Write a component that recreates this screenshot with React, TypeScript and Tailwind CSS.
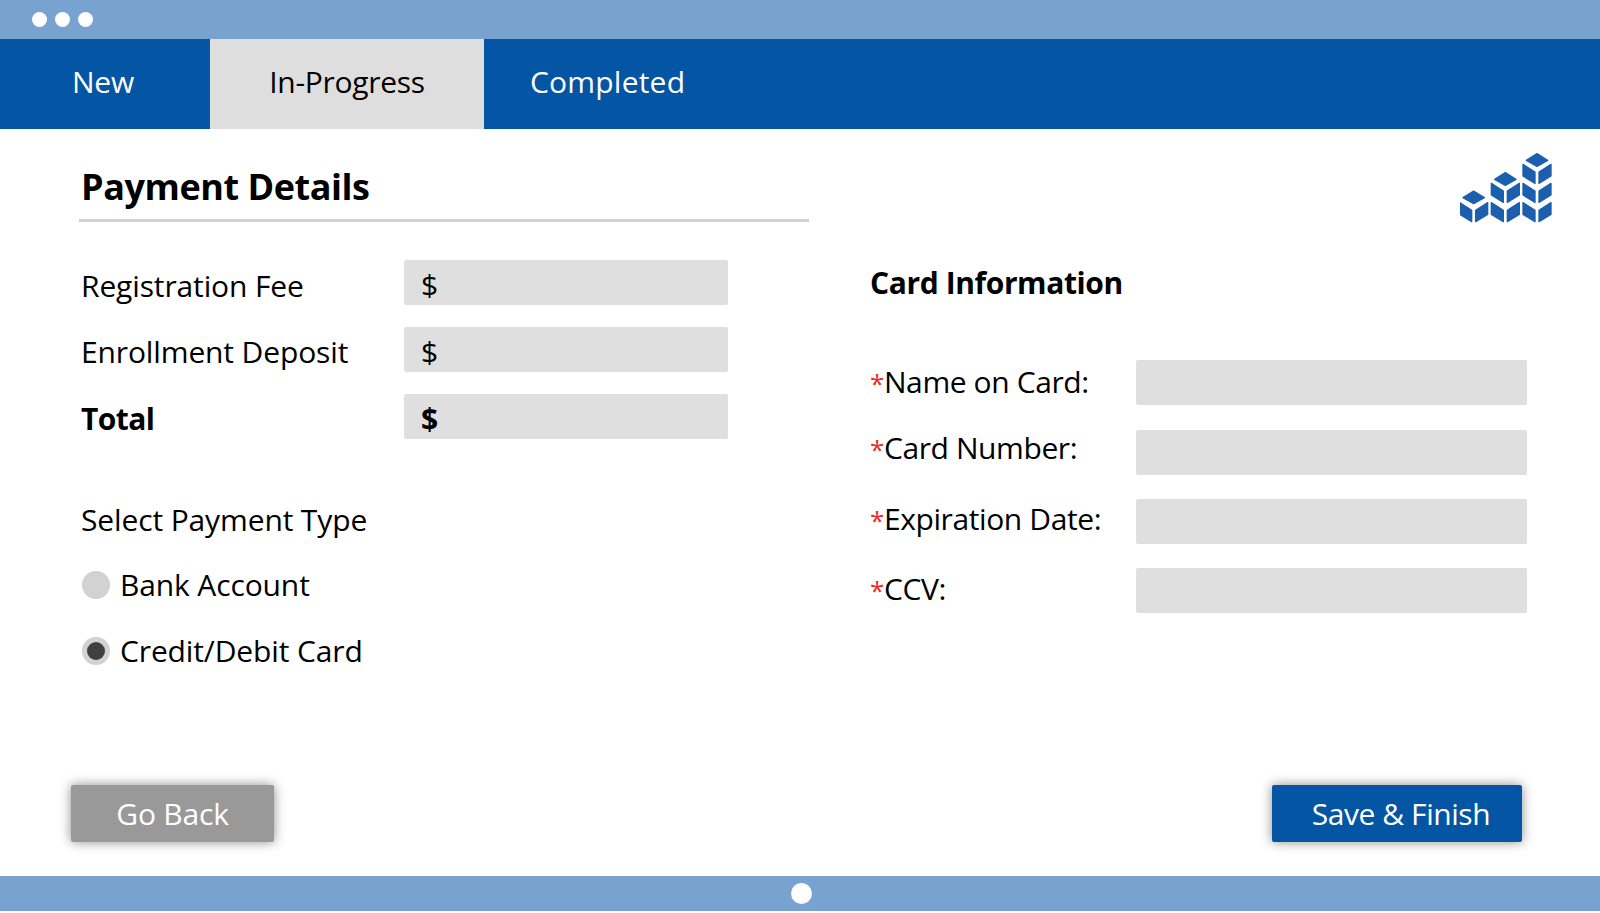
const font = "font-['Open_Sans',sans-serif]";

function Cube({ cx, y }: { cx: number; y: number }) {
  return (
    <g fill="#1b5fae" stroke="#1b5fae" strokeWidth="4" strokeLinejoin="round">
      <polygon points={`${cx + 6},${y + 23} ${cx + 42},${y} ${cx + 42},${y + 35} ${cx + 6},${y + 57}`} />
      <polygon points={`${cx - 6},${y + 23} ${cx - 42},${y} ${cx - 42},${y + 35} ${cx - 6},${y + 57}`} />
    </g>
  );
}

function Top({ cx, y }: { cx: number; y: number }) {
  return (
    <polygon
      points={`${cx},${y} ${cx + 32},${y + 20} ${cx},${y + 38} ${cx - 32},${y + 20}`}
      fill="#1b5fae"
      stroke="#1b5fae"
      strokeWidth="4"
      strokeLinejoin="round"
    />
  );
}

function Logo() {
  return (
    <svg width="94" height="72" viewBox="92 36 282 216" className="block">
      <Top cx={133} y={150} />
      <Cube cx={133} y={185} />
      <Top cx={228} y={95} />
      <Cube cx={228} y={127} />
      <Cube cx={228} y={185} />
      <Top cx={323} y={38} />
      <Cube cx={323} y={70} />
      <Cube cx={323} y={127} />
      <Cube cx={323} y={185} />
    </svg>
  );
}

function Dot() {
  return <span className="block w-[15px] h-[15px] rounded-full bg-white" />;
}

function AmountRow({ label, bold, shift }: { label: string; bold?: boolean; shift: string }) {
  return (
    <div className="flex items-start h-[45px]">
      <span className={`w-[325px] pl-[2px] text-[30px] leading-[45px] text-black ${shift} ${bold ? "font-bold tracking-[-0.6px]" : "tracking-[-0.13px]"}`}>{label}</span>
      <div className={`w-[324px] h-[45px] bg-[#dfdfdf] rounded-[2px] pl-[17px] pt-[2px] text-[30px] leading-[45px] text-black ${bold ? "font-bold" : ""}`}>$</div>
    </div>
  );
}

function CardRow({ label, gap, shift }: { label: string; gap: string; shift: string }) {
  return (
    <div className={`flex items-start h-[45px] ${gap}`}>
      <span className={`w-[266px] text-[30px] leading-[45px] tracking-[-0.4px] text-black whitespace-nowrap ${shift}`}>
        <span className="text-[#ee2a2a] text-[26px]">*</span>
        {label}
      </span>
      <div className="w-[391px] h-[45px] bg-[#dfdfdf] rounded-[2px]" />
    </div>
  );
}

function Radio({ label, checked }: { label: string; checked?: boolean }) {
  return (
    <div className="flex items-center h-[45px] pl-[3px]">
      <span className="w-[28px] h-[28px] rounded-full bg-[#d2d2d2] flex items-center justify-center">
        {checked && <span className="block w-[18px] h-[18px] rounded-full bg-[#404040]" />}
      </span>
      <span className="ml-[10px] text-[30px] leading-[45px] tracking-[-0.13px] text-black">{label}</span>
    </div>
  );
}

export default function App() {
  return (
    <div className={`w-[1600px] h-[913px] bg-white flex flex-col overflow-hidden ${font}`}>
      <div className="h-[39px] bg-[#78a2d0] flex items-center pl-[32px] gap-[8px] shrink-0">
        <Dot />
        <Dot />
        <Dot />
      </div>
      <div className="h-[90px] bg-[#0455a4] flex shrink-0 text-[30px] pb-[6px]">
        <div className="w-[210px] -mb-[6px] pb-[6px] flex items-center justify-center text-white tracking-[-0.2px] pr-[4px]">New</div>
        <div className="w-[274px] -mb-[6px] pb-[6px] flex items-center justify-center bg-[#dedede] text-black tracking-[-0.3px]">In-Progress</div>
        <div className="pl-[46px] flex items-center text-white tracking-[0.2px]">Completed</div>
      </div>

      <div className="flex-1 flex flex-col min-h-0">
        <div className="flex flex-1 min-h-0">
          <div className="w-[870px] shrink-0 pl-[79px] pt-[28px]">
            <div className="w-[730px] h-[65px] border-b-[3px] border-[#d2d2d2] pl-[2px] pt-[2px]">
              <h1 className="text-[36px] leading-[56px] font-bold tracking-[-0.45px] text-black">Payment Details</h1>
            </div>
            <div className="mt-[38px] flex flex-col gap-[22px]">
              <AmountRow label="Registration Fee" shift="mt-[3px]" />
              <AmountRow label="Enrollment Deposit" shift="mt-[2px]" />
              <AmountRow label="Total" bold shift="mt-[2px]" />
            </div>
            <div className="mt-[58px] pl-[2px] text-[30px] leading-[45px] tracking-[-0.13px] text-black">Select Payment Type</div>
            <div className="mt-[20px] flex flex-col gap-[21px]">
              <Radio label="Bank Account" />
              <Radio label="Credit/Debit Card" checked />
            </div>
          </div>
          <div className="flex-1 relative">
            <div className="absolute right-[46px] top-[24px]">
              <Logo />
            </div>
            <h2 className="mt-[131px] text-[30px] leading-[45px] font-bold tracking-[-0.4px] text-black">Card Information</h2>
            <div className="mt-[55px] flex flex-col">
              <CardRow label="Name on Card:" gap="" shift="-mt-[1px]" />
              <CardRow label="Card Number:" gap="mt-[25px]" shift="-mt-[5px]" />
              <CardRow label="Expiration Date:" gap="mt-[24px]" shift="-mt-[3px]" />
              <CardRow label="CCV:" gap="mt-[24px]" shift="-mt-[2px]" />
            </div>
          </div>
        </div>
        <div className="flex justify-between pl-[71px] pr-[78px] pb-[34px] shrink-0">
          <button className="w-[203px] h-[57px] bg-[#999999] rounded-[2px] text-white text-[30px] tracking-[-0.2px] shadow-[0_0_12px_rgba(0,0,0,0.45)]">Go Back</button>
          <button className="w-[250px] h-[57px] bg-[#0455a4] rounded-[2px] text-white text-[30px] tracking-[-0.45px] shadow-[0_0_12px_rgba(0,0,0,0.45)] pl-[8px]">Save &amp; Finish</button>
        </div>
      </div>

      <div className="h-[35px] mb-[2px] bg-[#78a2d0] flex items-center justify-center shrink-0">
        <span className="block w-[21px] h-[21px] rounded-full bg-white ml-[3px]" />
      </div>
    </div>
  );
}
